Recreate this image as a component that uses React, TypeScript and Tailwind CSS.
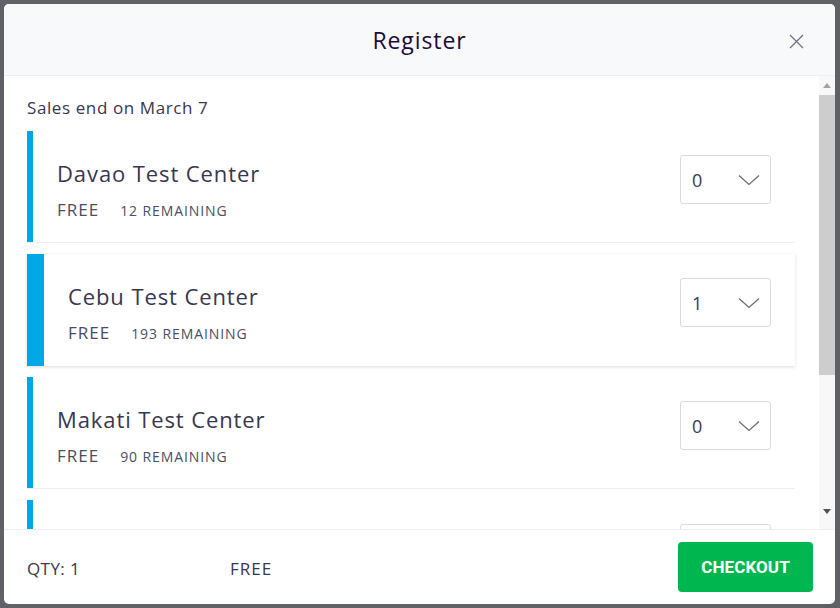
import React from "react";

const tickets = [
  { name: "Davao Test Center", remaining: "12 REMAINING", qty: "0", selected: false },
  { name: "Cebu Test Center", remaining: "193 REMAINING", qty: "1", selected: true },
  { name: "Makati Test Center", remaining: "90 REMAINING", qty: "0", selected: false },
];

function Chevron() {
  return (
    <svg width="22" height="12" viewBox="0 0 22 12" fill="none">
      <path d="M1 1.5 L11 10.5 L21 1.5" stroke="#6b6b7a" strokeWidth="1.3" />
    </svg>
  );
}

function Select({ value }: { value: string }) {
  return (
    <div className="flex h-[49px] w-[91px] shrink-0 items-center justify-between rounded-[3px] border border-[#dbdae3] bg-white pl-[11px] pr-[10px]">
      <span className="pt-[2px] text-[18px] text-[#39364f]">{value}</span>
      <Chevron />
    </div>
  );
}

function Card({ t }: { t: (typeof tickets)[number] }) {
  return (
    <div
      className={
        "flex h-[112px] shrink-0 bg-white " +
        (t.selected
          ? "shadow-[0_1px_3px_rgba(40,44,53,0.18)]"
          : "border-b border-[#eeedf2]")
      }
    >
      <div className={(t.selected ? "w-[17px]" : "w-[6px]") + " shrink-0 bg-[#00a7e6]"} />
      <div className="flex flex-1 items-start justify-between pl-[24px] pr-[24px] pt-[24px]">
        <div className="flex flex-col">
          <div className="mt-[2px] text-[22px] leading-[32px] tracking-[0.9px] text-[#39364f]">{t.name}</div>
          <div className="mt-[8px] flex items-baseline">
            <span className="text-[17px] tracking-[1px] text-[#4b4d63]">FREE</span>
            <span className="ml-[21px] text-[14px] tracking-[0.9px] text-[#4b4d63]">{t.remaining}</span>
          </div>
        </div>
        <Select value={t.qty} />
      </div>
    </div>
  );
}

function StubCard() {
  return (
    <div className="flex h-[112px] shrink-0 bg-white">
      <div className="w-[6px] shrink-0 bg-[#00a7e6]" />
      <div className="flex flex-1 items-start justify-end pr-[24px] pt-[24px]">
        <div className="h-[49px] w-[91px] rounded-[3px] border border-[#dbdae3] bg-white" />
      </div>
    </div>
  );
}

export default function App() {
  return (
    <div
      className="flex h-[608px] w-[840px] bg-[#5f6167] p-[4px] pr-[5px]"
      style={{ fontFamily: "'Open Sans', 'Liberation Sans', sans-serif" }}
    >
      <div className="flex flex-1 flex-col overflow-hidden rounded-[5px] bg-white">
        {/* Header */}
        <div className="relative flex h-[72px] shrink-0 items-center justify-center border-b border-[#eeedf2] bg-[#f8f9fb]">
          <span className="pt-[2px] text-[23px] tracking-[0.9px] text-[#1e0a3c]">Register</span>
          <svg className="absolute right-[31px] top-[30px]" width="15" height="15" viewBox="0 0 15 15">
            <path d="M1 1 L14 14 M14 1 L1 14" stroke="#6f7287" strokeWidth="1.3" />
          </svg>
        </div>
        {/* Body */}
        <div className="flex h-[453px] shrink-0">
          <div className="flex flex-1 flex-col gap-[11px] overflow-hidden pl-[23px] pr-[24px] pt-[20px]">
            <div className="text-[17px] leading-[24px] tracking-[0.6px] text-[#39364f]">Sales end on March 7</div>
            {tickets.map((t) => (
              <Card key={t.name} t={t} />
            ))}
            <StubCard />
          </div>
          {/* Scrollbar */}
          <div className="flex w-[16px] shrink-0 flex-col items-center bg-[#f8f8f8]">
            <div className="flex h-[19px] items-center justify-center">
              <svg width="8" height="5" viewBox="0 0 8 5"><path d="M4 0 L8 5 L0 5 Z" fill="#a3a3a3" /></svg>
            </div>
            <div className="h-[280px] w-full bg-[#cdcdcd]" />
            <div className="flex-1" />
            <div className="flex h-[20px] items-start justify-center">
              <svg width="8" height="5" viewBox="0 0 8 5"><path d="M0 0 L8 0 L4 5 Z" fill="#505050" /></svg>
            </div>
          </div>
        </div>
        {/* Footer */}
        <div className="flex flex-1 items-center border-t border-[#eeedf2] pl-[23px] pr-[22px] pt-[3px]">
          <span className="w-[203px] text-[17px] tracking-[0.4px] text-[#39364f]">QTY: 1</span>
          <span className="text-[17px] tracking-[1px] text-[#39364f]">FREE</span>
          <div className="flex-1" />
          <button
            className="-mt-[3px] flex h-[50px] w-[135px] items-center justify-center rounded-[4px] bg-[#00b74f] pt-[1px] text-[17px] font-bold tracking-[0.1px] text-white"
            style={{ fontFamily: "Roboto, 'Liberation Sans', sans-serif" }}
          >
            CHECKOUT
          </button>
        </div>
      </div>
    </div>
  );
}
